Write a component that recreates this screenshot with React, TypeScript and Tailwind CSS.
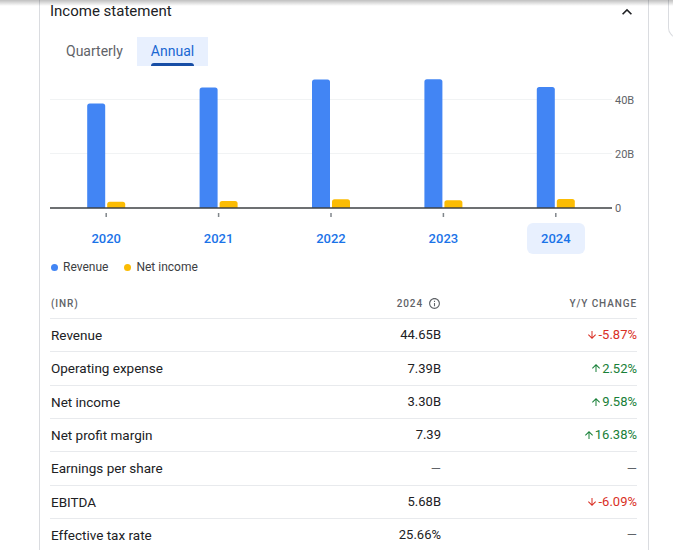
import React from "react";

type YearRow = { year: string; revenue: number; net: number };

const years: YearRow[] = [
  { year: "2020", revenue: 38.5, net: 2.3 },
  { year: "2021", revenue: 44.4, net: 2.6 },
  { year: "2022", revenue: 47.4, net: 3.2 },
  { year: "2023", revenue: 47.5, net: 2.9 },
  { year: "2024", revenue: 44.65, net: 3.3 },
];

type Row = { label: string; value: string; change: string; dir: "up" | "down" | "none" };

const rows: Row[] = [
  { label: "Revenue", value: "44.65B", change: "-5.87%", dir: "down" },
  { label: "Operating expense", value: "7.39B", change: "2.52%", dir: "up" },
  { label: "Net income", value: "3.30B", change: "9.58%", dir: "up" },
  { label: "Net profit margin", value: "7.39", change: "16.38%", dir: "up" },
  { label: "Earnings per share", value: "—", change: "—", dir: "none" },
  { label: "EBITDA", value: "5.68B", change: "-6.09%", dir: "down" },
  { label: "Effective tax rate", value: "25.66%", change: "—", dir: "none" },
];

// chart geometry (svg coords)
const PLOT_W = 562;
const BASE = 138;
const GRID40 = 29.5;
const PER_B = (BASE - GRID40) / 40;
const COL = PLOT_W / 5;

function topRounded(x: number, y: number, w: number, h: number, r: number) {
  return `M${x},${y + h} L${x},${y + r} Q${x},${y} ${x + r},${y} L${x + w - r},${y} Q${x + w},${y} ${x + w},${y + r} L${x + w},${y + h} Z`;
}

function ArrowDown() {
  return (
    <svg width="12" height="12" viewBox="0 0 24 24" fill="currentColor">
      <path d="M20 12l-1.41-1.41L13 16.17V4h-2v12.17l-5.58-5.59L4 12l8 8 8-8z" />
    </svg>
  );
}

function ArrowUp() {
  return (
    <svg width="12" height="12" viewBox="0 0 24 24" fill="currentColor">
      <path d="M4 12l1.41 1.41L11 7.83V20h2V7.83l5.58 5.59L20 12l-8-8-8 8z" />
    </svg>
  );
}

function Chart() {
  return (
    <svg width={587} height={153} className="block">
      <line x1={0} x2={PLOT_W} y1={GRID40} y2={GRID40} stroke="#f1f3f4" strokeWidth={1} />
      <line x1={0} x2={PLOT_W} y1={83.5} y2={83.5} stroke="#f1f3f4" strokeWidth={1} />
      {years.map((y, i) => {
        const c = COL * i + COL / 2;
        const rh = y.revenue * PER_B;
        const nh = y.net * PER_B;
        return (
          <g key={y.year}>
            <path d={topRounded(c - 19, BASE - rh, 18, rh, 2.5)} fill="#4285f4" />
            <path d={topRounded(c + 1, BASE - nh, 18, nh, 2.5)} fill="#fbbc04" />
            <line x1={c} x2={c} y1={143} y2={147} stroke="#80868b" strokeWidth={1.5} />
          </g>
        );
      })}
      <line x1={0} x2={PLOT_W} y1={BASE} y2={BASE} stroke="#3c4043" strokeWidth={1.5} />
      <g fontFamily="Roboto, 'Liberation Sans', sans-serif" fontSize={11} fill="#5f6368">
        <text x={565} y={GRID40 + 4}>40B</text>
        <text x={565} y={83.5 + 4}>20B</text>
        <text x={565} y={BASE + 4}>0</text>
      </g>
    </svg>
  );
}

export default function App() {
  return (
    <div className="relative h-[550px] w-[673px] overflow-hidden bg-white font-['Roboto','Liberation_Sans',sans-serif] text-[#202124]">
      <div className="flex h-full">
        <div className="w-[39px] shrink-0" />
        <div className="w-[610px] shrink-0 border-x border-[#dadce0] px-[10px]">
          <div className="flex h-[23px] items-center justify-between">
            <span className="text-[15px] text-[#202124]">Income statement</span>
            <svg width="20" height="20" viewBox="0 0 24 24" fill="#202124" className="mr-[1px]">
              <path d="M7.41 15.41L12 10.83l4.59 4.58L18 14l-6-6-6 6z" />
            </svg>
          </div>

          <div className="mt-[14px] ml-[2px] flex h-[29px] text-[14px]">
            <button className="px-[14px] text-[#5f6368]">Quarterly</button>
            <button className="relative flex items-center bg-[#e8f0fe] px-[14px] text-[#1967d2]">
              <span className="relative flex h-full items-center">
                Annual
                <span className="absolute bottom-0 left-0 right-0 h-[3px] rounded-t-sm bg-[#174ea6]" />
              </span>
            </button>
          </div>

          <div className="mt-[4px]">
            <Chart />
          </div>

          <div className="grid w-[562px] grid-cols-5">
            {years.map((y) => (
              <div key={y.year} className="flex justify-center">
                <button
                  className={
                    y.year === "2024"
                      ? "h-[31px] w-[58px] rounded-md bg-[#e8f0fe] text-[13px] font-medium text-[#1a73e8]"
                      : "h-[31px] w-[58px] rounded-md text-[13px] font-medium text-[#1a73e8]"
                  }
                >
                  {y.year}
                </button>
              </div>
            ))}
          </div>

          <div className="mt-[5px] ml-[1px] flex h-4 items-center text-[12px] text-[#3c4043]">
            <span className="h-[7px] w-[7px] rounded-full bg-[#4285f4]" />
            <span className="ml-[5px]">Revenue</span>
            <span className="ml-4 h-[7px] w-[7px] rounded-full bg-[#fbbc04]" />
            <span className="ml-[5px]">Net income</span>
          </div>

          <div className="mt-[13px] w-[587px]">
            <div className="grid h-[30px] grid-cols-[1fr_150px_196px] items-center text-[10px] font-medium tracking-[0.09em] text-[#5f6368]">
              <span className="pl-px">(INR)</span>
              <span className="flex items-center justify-end gap-[5px]">
                2024
                <svg width="13" height="13" viewBox="0 0 24 24" fill="#5f6368">
                  <path d="M11 7h2v2h-2zm0 4h2v6h-2zm1-9C6.48 2 2 6.48 2 12s4.48 10 10 10 10-4.48 10-10S17.52 2 12 2zm0 18c-4.41 0-8-3.59-8-8s3.59-8 8-8 8 3.59 8 8-3.59 8-8 8z" />
                </svg>
              </span>
              <span className="text-right">Y/Y CHANGE</span>
            </div>
            {rows.map((r) => (
              <div
                key={r.label}
                className="grid h-[33.33px] grid-cols-[1fr_150px_196px] items-center border-t border-[#e8eaed] text-[13px]"
              >
                <span className="pl-px text-[13.5px]">{r.label}</span>
                <span className={r.value === "—" ? "text-right text-[#5f6368]" : "text-right"}>{r.value}</span>
                <span
                  className={
                    r.dir === "down"
                      ? "flex items-center justify-end gap-[1px] text-[#d93025]"
                      : r.dir === "up"
                      ? "flex items-center justify-end text-[#188038]"
                      : "flex items-center justify-end text-[#5f6368]"
                  }
                >
                  {r.dir === "down" && <ArrowDown />}
                  {r.dir === "up" && <ArrowUp />}
                  {r.change}
                </span>
              </div>
            ))}
          </div>
        </div>
        <div className="ml-[19px] h-[38px] w-4 shrink-0 rounded-bl-[10px] border-b border-l border-[#dadce0]" />
      </div>
      <div className="pointer-events-none absolute inset-x-0 top-0 h-[6px] bg-linear-to-b from-black/25 to-transparent" />
    </div>
  );
}
